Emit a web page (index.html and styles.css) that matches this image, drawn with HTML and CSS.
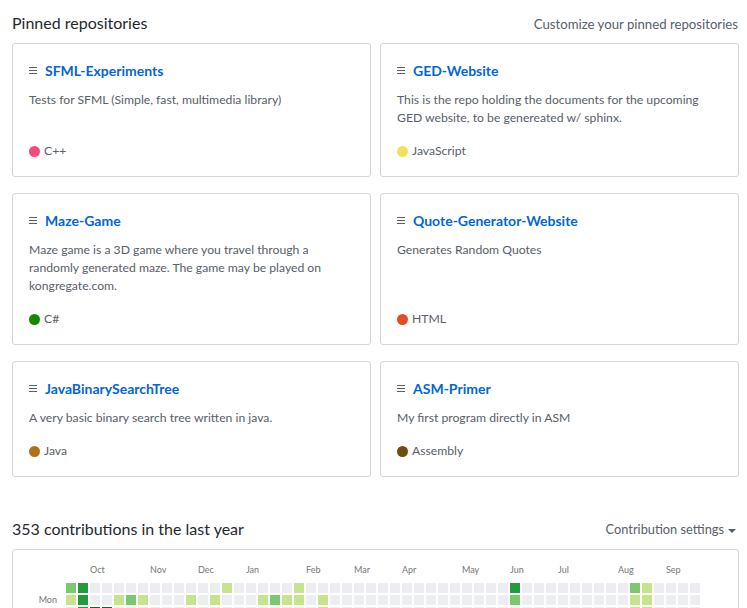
FILE: index.html
```html
<!DOCTYPE html>
<html lang="en">
<head>
<meta charset="utf-8">
<title>Profile</title>
<link rel="stylesheet" href="styles.css">
</head>
<body>
<div class="page">
  <div class="section-head">
    <h2 class="section-title">Pinned repositories</h2>
    <a class="head-link">Customize your pinned repositories</a>
  </div>

  <ol class="pinned">
    <li class="card">
      <div class="card-title"><svg class="repo-icon" width="8" height="7" viewBox="0 0 8 7"><rect x="0" y="0" width="8" height="1"/><rect x="0" y="3" width="8" height="1"/><rect x="0" y="6" width="8" height="1"/></svg><span class="repo-name">SFML-Experiments</span></div>
      <p class="desc">Tests for SFML (Simple, fast, multimedia library)</p>
      <p class="lang"><span class="dot cpp"></span>C++</p>
    </li>
    <li class="card">
      <div class="card-title"><svg class="repo-icon" width="8" height="7" viewBox="0 0 8 7"><rect x="0" y="0" width="8" height="1"/><rect x="0" y="3" width="8" height="1"/><rect x="0" y="6" width="8" height="1"/></svg><span class="repo-name">GED-Website</span></div>
      <p class="desc">This is the repo holding the documents for the upcoming GED website, to be genereated w/ sphinx.</p>
      <p class="lang"><span class="dot js"></span>JavaScript</p>
    </li>
    <li class="card">
      <div class="card-title"><svg class="repo-icon" width="8" height="7" viewBox="0 0 8 7"><rect x="0" y="0" width="8" height="1"/><rect x="0" y="3" width="8" height="1"/><rect x="0" y="6" width="8" height="1"/></svg><span class="repo-name">Maze-Game</span></div>
      <p class="desc">Maze game is a 3D game where you travel through a randomly generated maze. The game may be played on kongregate.com.</p>
      <p class="lang"><span class="dot cs"></span>C#</p>
    </li>
    <li class="card">
      <div class="card-title"><svg class="repo-icon" width="8" height="7" viewBox="0 0 8 7"><rect x="0" y="0" width="8" height="1"/><rect x="0" y="3" width="8" height="1"/><rect x="0" y="6" width="8" height="1"/></svg><span class="repo-name">Quote-Generator-Website</span></div>
      <p class="desc">Generates Random Quotes</p>
      <p class="lang"><span class="dot html"></span>HTML</p>
    </li>
    <li class="card">
      <div class="card-title"><svg class="repo-icon" width="8" height="7" viewBox="0 0 8 7"><rect x="0" y="0" width="8" height="1"/><rect x="0" y="3" width="8" height="1"/><rect x="0" y="6" width="8" height="1"/></svg><span class="repo-name">JavaBinarySearchTree</span></div>
      <p class="desc">A very basic binary search tree written in java.</p>
      <p class="lang"><span class="dot java"></span>Java</p>
    </li>
    <li class="card">
      <div class="card-title"><svg class="repo-icon" width="8" height="7" viewBox="0 0 8 7"><rect x="0" y="0" width="8" height="1"/><rect x="0" y="3" width="8" height="1"/><rect x="0" y="6" width="8" height="1"/></svg><span class="repo-name">ASM-Primer</span></div>
      <p class="desc">My first program directly in ASM</p>
      <p class="lang"><span class="dot asm"></span>Assembly</p>
    </li>
  </ol>

  <div class="section-head contrib-head">
    <h2 class="section-title">353 contributions in the last year</h2>
    <a class="head-link settings-link">Contribution settings<span class="caret"></span></a>
  </div>

  <div class="graph">
    <div class="months">
      <span class="month" style="grid-column:3">Oct</span>
      <span class="month" style="grid-column:8">Nov</span>
      <span class="month" style="grid-column:12">Dec</span>
      <span class="month" style="grid-column:16">Jan</span>
      <span class="month" style="grid-column:21">Feb</span>
      <span class="month" style="grid-column:25">Mar</span>
      <span class="month" style="grid-column:29">Apr</span>
      <span class="month" style="grid-column:34">May</span>
      <span class="month" style="grid-column:38">Jun</span>
      <span class="month" style="grid-column:42">Jul</span>
      <span class="month" style="grid-column:47">Aug</span>
      <span class="month" style="grid-column:51">Sep</span>
    </div>
    <div class="graph-body">
      <div class="days">
        <span class="day mon">Mon</span>
        <span class="day wed">Wed</span>
        <span class="day fri">Fri</span>
      </div>
      <div class="cells">
<i class="l2"></i><i class="l1"></i><i></i><i></i><i></i><i></i><i></i>
<i class="l3"></i><i class="l3"></i><i class="l3"></i><i></i><i></i><i></i><i></i>
<i></i><i></i><i class="l4"></i><i></i><i></i><i></i><i></i>
<i></i><i></i><i class="l4"></i><i></i><i></i><i></i><i></i>
<i></i><i class="l1"></i><i></i><i></i><i></i><i></i><i></i>
<i></i><i class="l2"></i><i></i><i></i><i></i><i></i><i></i>
<i></i><i class="l1"></i><i></i><i></i><i></i><i></i><i></i>
<i></i><i></i><i></i><i></i><i></i><i></i><i></i>
<i></i><i></i><i></i><i></i><i></i><i></i><i></i>
<i></i><i></i><i></i><i></i><i></i><i></i><i></i>
<i></i><i class="l1"></i><i></i><i></i><i></i><i></i><i></i>
<i></i><i></i><i></i><i></i><i></i><i></i><i></i>
<i></i><i class="l1"></i><i></i><i></i><i></i><i></i><i></i>
<i class="l1"></i><i></i><i></i><i></i><i></i><i></i><i></i>
<i></i><i></i><i></i><i></i><i></i><i></i><i></i>
<i></i><i></i><i></i><i></i><i></i><i></i><i></i>
<i></i><i class="l1"></i><i></i><i></i><i></i><i></i><i></i>
<i></i><i class="l2"></i><i></i><i></i><i></i><i></i><i></i>
<i></i><i class="l1"></i><i></i><i></i><i></i><i></i><i></i>
<i class="l1"></i><i class="l1"></i><i></i><i></i><i></i><i></i><i></i>
<i></i><i></i><i></i><i></i><i></i><i></i><i></i>
<i></i><i class="l1"></i><i class="l1"></i><i></i><i></i><i></i><i></i>
<i></i><i></i><i></i><i></i><i></i><i></i><i></i>
<i></i><i></i><i></i><i></i><i></i><i></i><i></i>
<i></i><i></i><i></i><i></i><i></i><i></i><i></i>
<i></i><i></i><i></i><i></i><i></i><i></i><i></i>
<i></i><i></i><i></i><i></i><i></i><i></i><i></i>
<i></i><i></i><i></i><i></i><i></i><i></i><i></i>
<i></i><i></i><i></i><i></i><i></i><i></i><i></i>
<i></i><i></i><i></i><i></i><i></i><i></i><i></i>
<i></i><i></i><i></i><i></i><i></i><i></i><i></i>
<i></i><i></i><i></i><i></i><i></i><i></i><i></i>
<i></i><i></i><i></i><i></i><i></i><i></i><i></i>
<i></i><i></i><i></i><i></i><i></i><i></i><i></i>
<i></i><i></i><i></i><i></i><i></i><i></i><i></i>
<i></i><i></i><i></i><i></i><i></i><i></i><i></i>
<i></i><i></i><i></i><i></i><i></i><i></i><i></i>
<i class="l3"></i><i class="l2"></i><i></i><i></i><i></i><i></i><i></i>
<i></i><i></i><i></i><i></i><i></i><i></i><i></i>
<i></i><i></i><i></i><i></i><i></i><i></i><i></i>
<i></i><i></i><i></i><i></i><i></i><i></i><i></i>
<i></i><i></i><i></i><i></i><i></i><i></i><i></i>
<i></i><i></i><i></i><i></i><i></i><i></i><i></i>
<i></i><i></i><i></i><i></i><i></i><i></i><i></i>
<i></i><i></i><i></i><i></i><i></i><i></i><i></i>
<i></i><i></i><i></i><i></i><i></i><i></i><i></i>
<i></i><i></i><i></i><i></i><i></i><i></i><i></i>
<i class="l2"></i><i class="l1"></i><i class="l1"></i><i></i><i></i><i></i><i></i>
<i class="l1"></i><i class="l1"></i><i class="l1"></i><i></i><i></i><i></i><i></i>
<i></i><i></i><i></i><i></i><i></i><i></i><i></i>
<i></i><i></i><i></i><i></i><i></i><i></i><i></i>
<i></i><i></i><i></i><i></i><i></i><i></i><i></i>
<i></i><i></i><i></i><i></i><i></i><i></i><i></i>
      </div>
    </div>
  </div>
</div>
</body>
</html>
```

FILE: styles.css
```css
* { box-sizing: border-box; }

html, body {
  margin: 0;
  background: #fff;
}

body {
  font-family: Lato, "Open Sans", "Liberation Sans", sans-serif;
  color: #24292e;
  font-size: 14px;
  line-height: 1.5;
}

.page {
  width: 727px;
  margin-left: 12px;
  padding-top: 11px;
}

.section-head {
  display: flex;
  justify-content: space-between;
  align-items: baseline;
  margin-bottom: 8px;
}

.section-title {
  margin: 0;
  font-size: 16px;
  font-weight: 400;
  line-height: 24px;
  color: #24292e;
}

.head-link {
  font-size: 13.2px;
  line-height: 18px;
  color: #586069;
  margin-right: 1px;
}

.settings-link {
  font-size: 12.8px;
}

.contrib-head {
  align-items: center;
  margin-right: 2px;
}

.caret {
  display: inline-block;
  width: 0;
  height: 0;
  margin-left: 4px;
  vertical-align: middle;
  border-top: 4px solid #586069;
  border-left: 4px solid transparent;
  border-right: 4px solid transparent;
}

.pinned {
  list-style: none;
  margin: 0 0 40px;
  padding: 0;
  display: grid;
  grid-template-columns: 359px 359px;
  column-gap: 9px;
  row-gap: 16px;
}

.card {
  border: 1px solid #d1d5da;
  border-radius: 3px;
  padding: 16px;
  display: flex;
  flex-direction: column;
}

.card-title {
  display: flex;
  align-items: center;
  height: 21px;
  font-size: 14px;
  font-weight: 700;
}

.repo-icon {
  fill: #586069;
  margin-right: 8px;
  flex: none;
}

.repo-name {
  color: #0366d6;
}

.desc {
  margin: 10px 0 15px;
  font-size: 12.2px;
  line-height: 18px;
  color: #586069;
}

.lang {
  margin: auto 0 0;
  font-size: 12.2px;
  line-height: 18px;
  color: #586069;
  display: flex;
  align-items: center;
}

.dot {
  width: 11px;
  height: 11px;
  border-radius: 50%;
  margin-right: 4px;
  flex: none;
}

.cpp { background: #f34b7d; }
.js { background: #f1e05a; }
.cs { background: #178600; }
.html { background: #e34c26; }
.java { background: #b07219; }
.asm { background: #6e4c13; }

.graph {
  border: 1px solid #d1d5da;
  border-radius: 3px;
  padding: 14px 14px 10px 14px;
  height: 140px;
}

.months {
  margin-left: 39px;
  display: grid;
  grid-template-columns: repeat(53, 10px);
  column-gap: 2px;
  height: 12px;
  margin-bottom: 7px;
}

.month {
  grid-row: 1;
  font-size: 9px;
  line-height: 12px;
  color: #767676;
  white-space: nowrap;
}

.graph-body {
  display: flex;
}

.days {
  width: 30px;
  margin-right: 9px;
  display: grid;
  grid-template-rows: repeat(7, 10px);
  row-gap: 2px;
}

.day {
  font-size: 9px;
  line-height: 10px;
  color: #767676;
  text-align: right;
}

.mon { grid-row: 2; }
.wed { grid-row: 4; }
.fri { grid-row: 6; }

.cells {
  display: grid;
  grid-template-rows: repeat(7, 10px);
  grid-auto-flow: column;
  grid-auto-columns: 10px;
  gap: 2px;
}

.cells i {
  display: block;
  width: 10px;
  height: 10px;
  background: #ebedf0;
}

.cells i.l1 { background: #c6e48b; }
.cells i.l2 { background: #7bc96f; }
.cells i.l3 { background: #239a3b; }
.cells i.l4 { background: #196127; }
```
